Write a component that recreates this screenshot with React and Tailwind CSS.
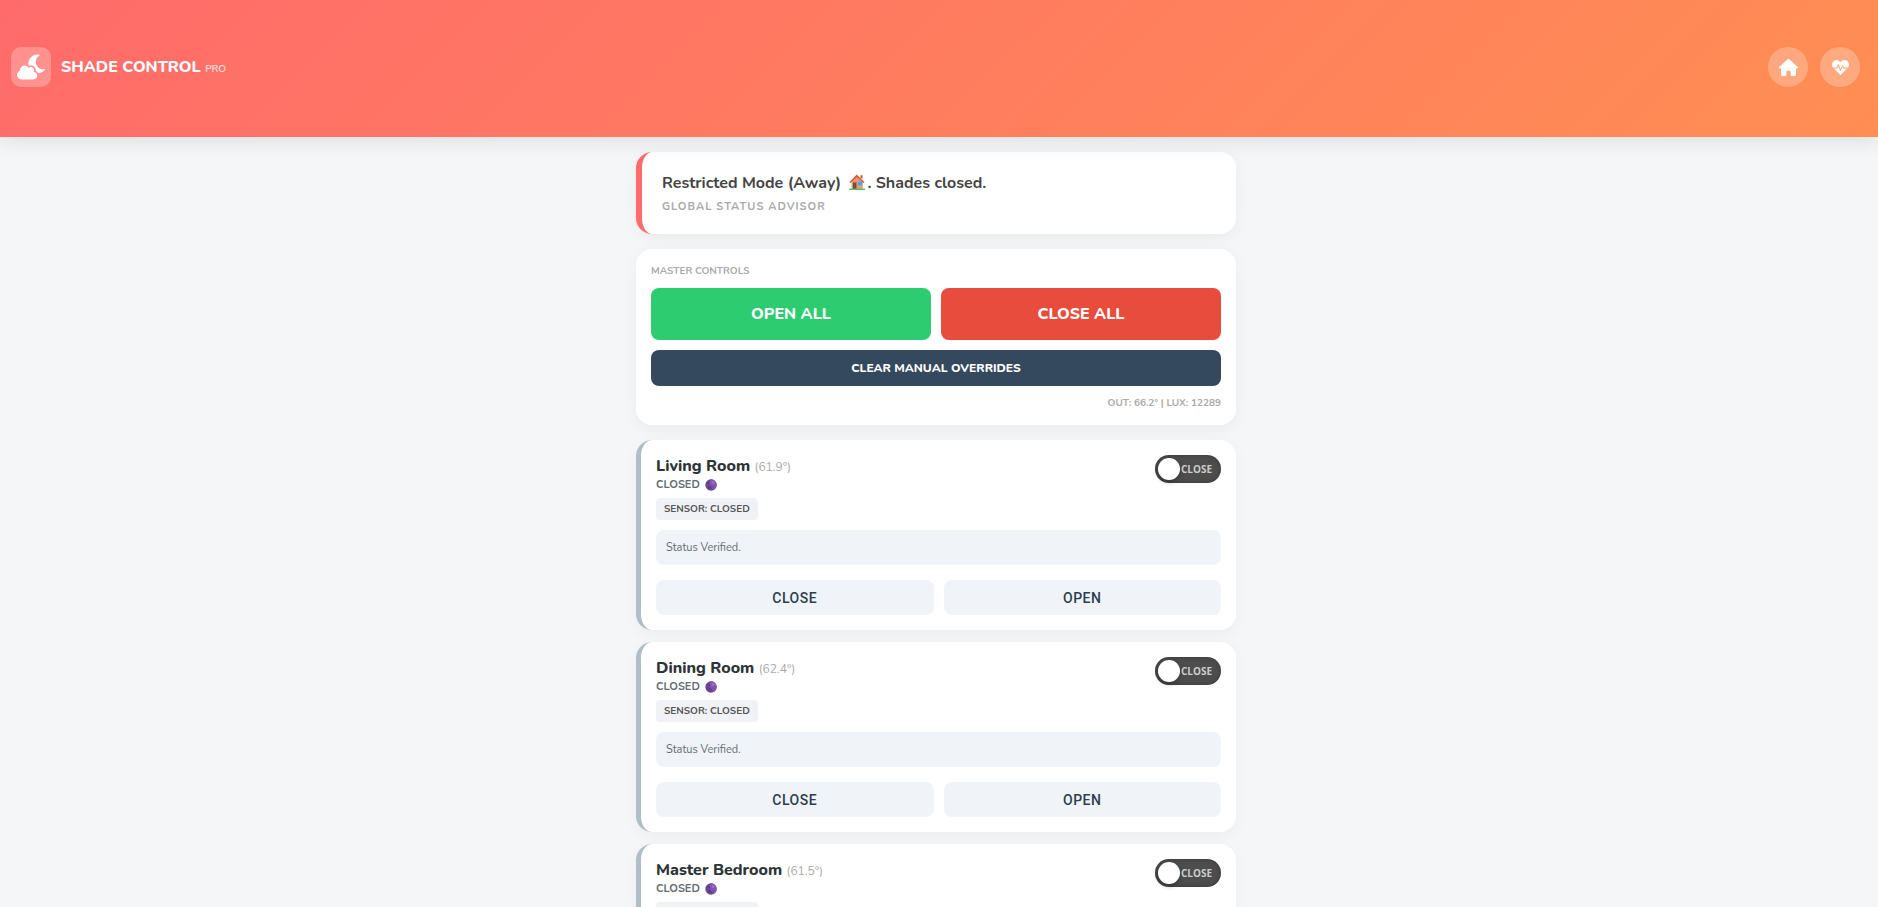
import { FaCloudMoon, FaHeartbeat } from "react-icons/fa";
import { FaHouse } from "react-icons/fa6";

const rooms = [
  { name: "Living Room", temp: "61.9°" },
  { name: "Dining Room", temp: "62.4°" },
  { name: "Master Bedroom", temp: "61.5°" },
];

function HouseEmoji() {
  return (
    <svg viewBox="0 0 16 16" className="mr-[2px] ml-1 inline-block size-4 align-[-2px]" role="img" aria-label="House">
      <path d="M2.500 7 8 2l5.500 5v8h-11z" fill="#e59a6b" />
      <path d="M9 3 13.500 7v8H9z" fill="#e8a070" />
      <path d="M11.500 1.200h2v4l-2-2z" fill="#b5622f" />
      <path d="M.4 8.300 7.700.6 15.600 8.300 14.400 9 7.800 2.900 1.600 9z" fill="#e0553a" />
      <path d="M4 8.500h3.500V15H4z" fill="#7b4a3f" />
      <path d="M9.200 7.500h3.800v3.800H9.200z" fill="#35a8f0" />
      <path d="M0 14.600h16V16H0z" fill="#4fbf7b" />
    </svg>
  );
}

function MoonEmoji() {
  return (
    <svg viewBox="0 0 12 12" className="size-3" role="img" aria-label="New moon">
      <circle cx="6" cy="6" r="5.700" fill="#6b4596" />
      <path d="M5 .4A5.700 5.700 0 0 1 9 10.800C7 10 7.500 8 6 7S4.500 2 5 .4z" fill="#8355b0" />
      <circle cx="8" cy="3.500" r="1.500" fill="#9a6fc6" />
      <circle cx="3.500" cy="4" r="1" fill="#5b3a80" />
      <circle cx="4.500" cy="8.500" r="1.300" fill="#5b3a80" />
      <circle cx="8.500" cy="8" r="1" fill="#74499f" />
    </svg>
  );
}

function RoomCard({ name, temp }) {
  return (
    <section className="rounded-2xl border-l-[5px] border-[#b0bec5] bg-white p-[15px] shadow-[0_4px_15px_rgba(0,0,0,0.04)]">
      <div className="flex items-start justify-between">
        <div>
          <h2 className="text-base leading-[22px] font-extrabold text-[#2d3436]">
            {name} <span className="text-xs font-normal text-[#aaaaaa]">({temp})</span>
          </h2>
          <p className="mt-[2px] flex h-3 items-center gap-[5px] text-[11px] font-bold text-[#636e72]">
            CLOSED <MoonEmoji />
          </p>
          <span className="mt-[7px] inline-flex h-[22px] items-center rounded bg-[#f0f2f5] px-2 text-[10px] font-bold text-[#555555]">
            SENSOR: CLOSED
          </span>
        </div>
        <label className="relative h-7 w-[66px] cursor-pointer">
          <input type="checkbox" aria-label={name + " mode"} className="absolute inset-0 size-full cursor-pointer appearance-none rounded-full bg-[#4d4d4d] shadow-[inset_0_0_4px_rgba(0,0,0,0.3)]" />
          <span className="pointer-events-none absolute top-[3px] left-[3px] size-[22px] rounded-full bg-white shadow-[0_2px_5px_rgba(0,0,0,0.3)]" />
          <span className="pointer-events-none absolute inset-y-0 right-[9px] flex items-center font-['Open_Sans',sans-serif] text-[10px] font-bold text-[#cccccc]">CLOSE</span>
        </label>
      </div>
      <p className="mt-[10px] flex h-[35px] items-center rounded-lg bg-[#f0f4f9] px-[10px] pt-[2px] text-[11px] text-[#666e72]">Status Verified.</p>
      <div className="mt-[15px] grid grid-cols-2 gap-[10px]">
        <button className="h-[35px] rounded-lg bg-[#f0f4f9] font-['Roboto',sans-serif] text-sm font-medium tracking-[0.5px] text-[#2c3e50]">CLOSE</button>
        <button className="h-[35px] rounded-lg bg-[#f0f4f9] font-['Roboto',sans-serif] text-sm font-medium tracking-[0.5px] text-[#2c3e50]">OPEN</button>
      </div>
    </section>
  );
}

export default function App() {
  return (
    <div className="min-h-screen bg-[#f4f6f8] font-['Nunito','Open_Sans',sans-serif]">
      <header className="relative flex items-center justify-between bg-linear-[135deg,#ff6b6b,#ff8e53] pt-[47px] pr-[18px] pb-[50px] pl-[11px] text-white shadow-[0_4px_20px_rgba(0,0,0,0.1)]">
        <div className="flex items-center gap-[10px]">
          <div className="flex size-10 items-center justify-center rounded-[10px] bg-white/25">
            <FaCloudMoon className="size-7" />
          </div>
          <h1 className="text-base font-extrabold">
            SHADE CONTROL <span className="text-[10px] font-semibold opacity-80">PRO</span>
          </h1>
        </div>
        <nav className="flex gap-3">
          <a href="#home" aria-label="Home" className="flex size-10 items-center justify-center rounded-full bg-white/25">
            <FaHouse className="h-[17px] w-[19px]" />
          </a>
          <a href="#health" aria-label="Health" className="flex size-10 items-center justify-center rounded-full bg-white/25">
            <FaHeartbeat className="size-[17px]" />
          </a>
        </nav>
      </header>
      <div className="pr-[6px]">
        <main className="mx-auto max-w-[600px] pt-[15px]">
          <section className="rounded-2xl border-l-[6px] border-[#ff6b6b] bg-white p-5 shadow-[0_4px_15px_rgba(0,0,0,0.05)]">
            <p className="text-base leading-[22px] font-bold text-[#444444]">
              Restricted Mode (Away) <HouseEmoji />. Shades closed.
            </p>
            <p className="mt-[6px] text-[11px] leading-[14px] font-bold tracking-[1px] text-[#aaaaaa]">GLOBAL STATUS ADVISOR</p>
          </section>
          <section className="mt-[15px] rounded-2xl bg-white p-[15px] shadow-[0_4px_15px_rgba(0,0,0,0.05)]">
            <h2 className="text-[10px] leading-[14px] font-bold text-[#aaaaaa]">MASTER CONTROLS</h2>
            <div className="mt-[10px] grid grid-cols-2 gap-[10px] text-white">
              <button className="h-[52px] rounded-lg bg-[#2ecc71] text-base font-extrabold">OPEN ALL</button>
              <button className="h-[52px] rounded-lg bg-[#e74c3c] text-base font-extrabold">CLOSE ALL</button>
              <button className="col-span-2 h-9 rounded-lg bg-[#34495e] text-xs font-extrabold">CLEAR MANUAL OVERRIDES</button>
            </div>
            <p className="mt-[10px] text-right text-[10px] leading-[14px] font-bold text-[#aaaaaa]">OUT: 66.2° | LUX: 12289</p>
          </section>
          <div className="mt-[15px] flex flex-col gap-3">
            {rooms.map((room) => (
              <RoomCard key={room.name} {...room} />
            ))}
          </div>
        </main>
      </div>
    </div>
  );
}
